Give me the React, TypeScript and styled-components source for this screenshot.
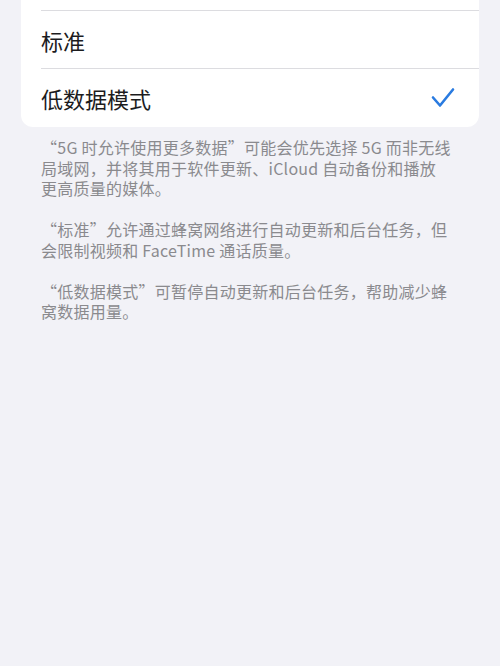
import React from "react";
import styled, { createGlobalStyle } from "styled-components";

const GlobalStyle = createGlobalStyle`
  html, body {
    margin: 0;
    padding: 0;
    background: #f2f2f7;
  }
  body {
    font-family: "Noto Sans CJK SC", "Noto Sans", sans-serif;
    -webkit-font-smoothing: antialiased;
  }
`;

const Page = styled.div`
  width: 500px;
  height: 666px;
  overflow: hidden;
  background: #f2f2f7;
  display: flex;
  flex-direction: column;
`;

const Group = styled.div`
  margin: -47px 21px 0;
  background: #ffffff;
  border-radius: 12px;
  overflow: hidden;
`;

const Row = styled.div<{ $last?: boolean }>`
  position: relative;
  height: 58px;
  padding: 0 24px 0 20px;
  display: flex;
  align-items: center;
  justify-content: space-between;
  font-size: 22px;
  color: #1c1c1e;
  &::after {
    content: "";
    display: ${(p) => (p.$last ? "none" : "block")};
    position: absolute;
    left: 20px;
    right: 0;
    bottom: 0;
    height: 1px;
    background: #dcdce0;
  }
`;

const Label = styled.span`
  line-height: 1;
`;

const Check = styled.svg`
  width: 24px;
  height: 22px;
  flex: none;
`;

const Footer = styled.div`
  padding: 10px 30px 0 41px;
  display: flex;
  flex-direction: column;
  gap: 20.5px;
`;

const Note = styled.p`
  margin: 0;
  font-size: 16px;
  line-height: 20.5px;
  letter-spacing: 0.25px;
  color: #8a8a8e;
  white-space: nowrap;
`;

const rows = [
  { label: "5G时允许使用更多数据", checked: false },
  { label: "标准", checked: false },
  { label: "低数据模式", checked: true },
];

const notes = [
  [
    "“5G 时允许使用更多数据”可能会优先选择 5G 而非无线",
    "局域网，并将其用于软件更新、iCloud 自动备份和播放",
    "更高质量的媒体。",
  ],
  ["“标准”允许通过蜂窝网络进行自动更新和后台任务，但", "会限制视频和 FaceTime 通话质量。"],
  ["“低数据模式”可暂停自动更新和后台任务，帮助减少蜂", "窝数据用量。"],
];

export default function App() {
  return (
    <>
      <GlobalStyle />
      <Page>
        <Group>
          {rows.map((r, i) => (
            <Row key={r.label} $last={i === rows.length - 1}>
              <Label>{r.label}</Label>
              {r.checked && (
                <Check viewBox="0 0 24 22">
                  <polyline
                    points="2,10.5 9,18.5 22,2.5"
                    fill="none"
                    stroke="#2a7be0"
                    strokeWidth="2.6"
                    strokeLinecap="round"
                    strokeLinejoin="round"
                  />
                </Check>
              )}
            </Row>
          ))}
        </Group>
        <Footer>
          {notes.map((lines, i) => (
            <Note key={i}>
              {lines.map((l, j) => (
                <React.Fragment key={j}>
                  {l}
                  {j < lines.length - 1 && <br />}
                </React.Fragment>
              ))}
            </Note>
          ))}
        </Footer>
      </Page>
    </>
  );
}
